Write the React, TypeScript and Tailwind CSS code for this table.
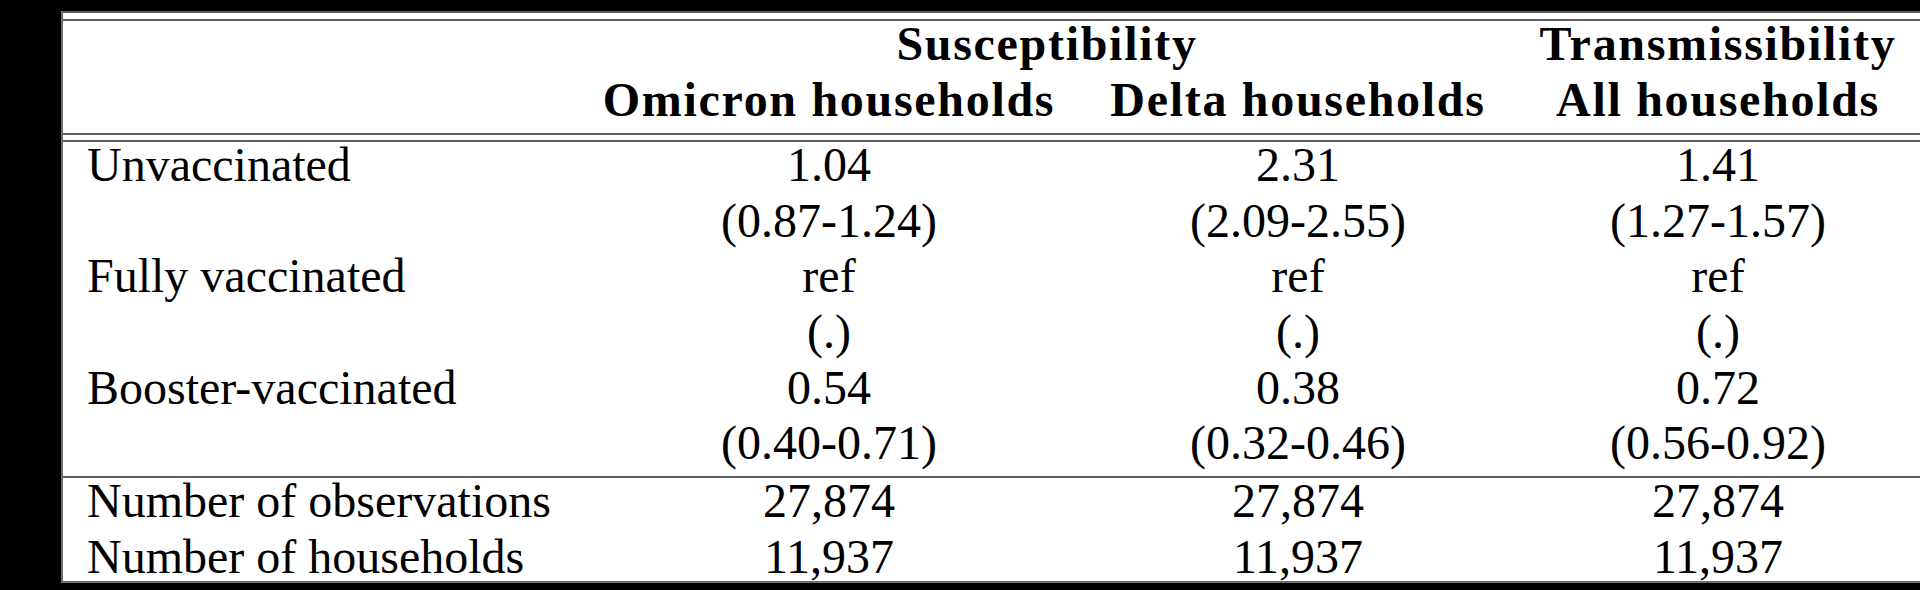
import React from 'react';

type Row = { label: string; values: string[] };

const bodyRows: Row[] = [
  { label: 'Unvaccinated', values: ['1.04', '2.31', '1.41'] },
  { label: '', values: ['(0.87-1.24)', '(2.09-2.55)', '(1.27-1.57)'] },
  { label: 'Fully vaccinated', values: ['ref', 'ref', 'ref'] },
  { label: '', values: ['(.)', '(.)', '(.)'] },
  { label: 'Booster-vaccinated', values: ['0.54', '0.38', '0.72'] },
  { label: '', values: ['(0.40-0.71)', '(0.32-0.46)', '(0.56-0.92)'] },
];

const countRows: Row[] = [
  { label: 'Number of observations', values: ['27,874', '27,874', '27,874'] },
  { label: 'Number of households', values: ['11,937', '11,937', '11,937'] },
];

const grid = 'grid grid-cols-[515px_502px_436px_1fr]';

const TableRow = ({ row }: { row: Row }) => (
  <div className={`${grid} h-[55.67px] shrink-0 leading-[46.5px]`}>
    <div className="pl-[24px] whitespace-nowrap">{row.label}</div>
    {row.values.map((v, i) => (
      <div key={i} className="text-center whitespace-nowrap">
        {v}
      </div>
    ))}
  </div>
);

const Rule = () => <div className="h-[2px] shrink-0 bg-[#5e5e5e]" />;

const App = () => {
  return (
    <div className="w-[1920px] h-[590px] bg-black pt-[11px] pl-[61px] overflow-hidden">
      <div className="h-[572px] bg-white border-l-2 border-b-2 border-[#6f6f6f] overflow-hidden flex flex-col text-black text-[48px] font-['Liberation_Serif','DejaVu_Serif',serif]">
        {/* top double rule */}
        <Rule />
        <div className="h-[6px] shrink-0" />
        <Rule />

        {/* header */}
        <div className={`${grid} font-bold tracking-[1.7px] leading-[46.5px] shrink-0`}>
          <div className="h-[56px]" />
          <div className="col-span-2 text-center h-[56px] whitespace-nowrap">Susceptibility</div>
          <div className="text-center h-[56px] whitespace-nowrap">Transmissibility</div>
          <div className="h-[56px]" />
          <div className="text-center h-[56px] whitespace-nowrap">Omicron households</div>
          <div className="text-center h-[56px] whitespace-nowrap">Delta households</div>
          <div className="text-center h-[56px] whitespace-nowrap">All households</div>
        </div>

        {/* mid double rule */}
        <Rule />
        <div className="h-[5px] shrink-0" />
        <Rule />

        {bodyRows.map((r, i) => (
          <TableRow key={i} row={r} />
        ))}

        <Rule />

        {countRows.map((r, i) => (
          <TableRow key={i} row={r} />
        ))}
      </div>
    </div>
  );
};

export default App;
